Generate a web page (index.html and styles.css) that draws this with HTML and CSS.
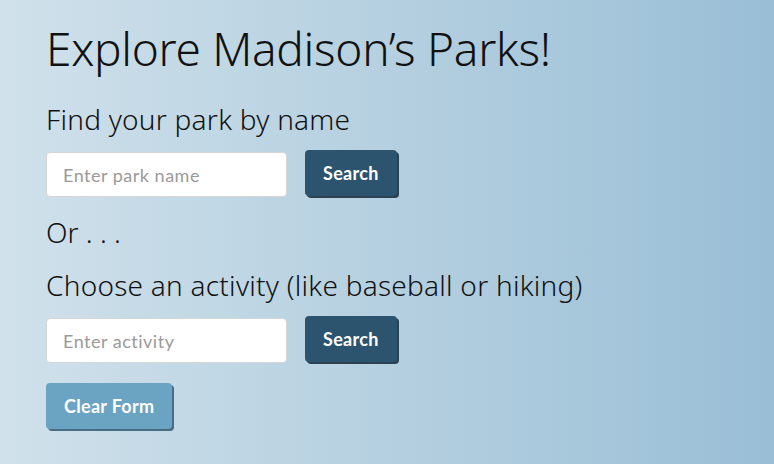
FILE: index.html
```html
<!DOCTYPE html>
<html>
<head>
<meta charset="utf-8">
<link rel="stylesheet" href="styles.css">
</head>
<body>
<main class="page">
  <h1 class="title">Explore Madison’s Parks!</h1>
  <form class="finder">
    <label class="label" for="park">Find your park by name</label>
    <div class="row">
      <input class="field" id="park" type="text" placeholder="Enter park name">
      <button class="btn btn-dark" type="button">Search</button>
    </div>
    <p class="or">Or . . .</p>
    <label class="label" for="activity">Choose an activity (like baseball or hiking)</label>
    <div class="row">
      <input class="field" id="activity" type="text" placeholder="Enter activity">
      <button class="btn btn-dark" type="button">Search</button>
    </div>
    <div class="row">
      <button class="btn btn-light" type="reset">Clear Form</button>
    </div>
  </form>
</main>
</body>
</html>
```
FILE: styles.css
```css
html, body {
  margin: 0;
  height: 100%;
}
body {
  background: linear-gradient(to right, #d0e1eb 0%, #b5d0e0 50%, #99bed6 100%);
  font-family: "Noto Sans", "Open Sans", sans-serif;
  color: #111;
}
.page {
  padding: 18px 0 0 46px;
}
.title {
  margin: 0;
  font-weight: 300;
  font-size: 46px;
  line-height: 60px;
  letter-spacing: -0.3px;
}
.finder {
  display: flex;
  flex-direction: column;
}
.label {
  margin-top: 23px;
  font-size: 28px;
  font-weight: 300;
  line-height: 36px;
  letter-spacing: 0.25px;
}
.label + .row {
  margin-top: 15px;
}
.row {
  display: flex;
  align-items: center;
  gap: 18px;
  margin-top: 12px;
}
.field {
  box-sizing: border-box;
  width: 241px;
  height: 45px;
  border: 1px solid #d6d6d6;
  border-radius: 4px;
  padding: 0 16px;
  font-family: Lato, sans-serif;
  font-size: 18px;
  letter-spacing: 0.5px;
  background: #fff;
}
.field::placeholder {
  color: #9a9a9a;
}
.or {
  margin: 17px 0 0;
  font-size: 28px;
  font-weight: 300;
  line-height: 36px;
}
.or + .label {
  margin-top: 17px;
}
.btn {
  border: none;
  border-radius: 4px;
  font-family: Lato, sans-serif;
  font-weight: 700;
  font-size: 18px;
  letter-spacing: 0.3px;
  color: #fff;
  height: 46px;
  padding: 0 18px;
  box-shadow: 2px 2px 0 rgba(20, 40, 55, 0.85);
  margin-top: -3px;
}
.btn-dark {
  background: #2d546f;
}
.btn-light {
  background: #6ba3c3;
  box-shadow: 2px 2px 0 rgba(40, 80, 105, 0.8);
  margin-top: 8px;
}
```
